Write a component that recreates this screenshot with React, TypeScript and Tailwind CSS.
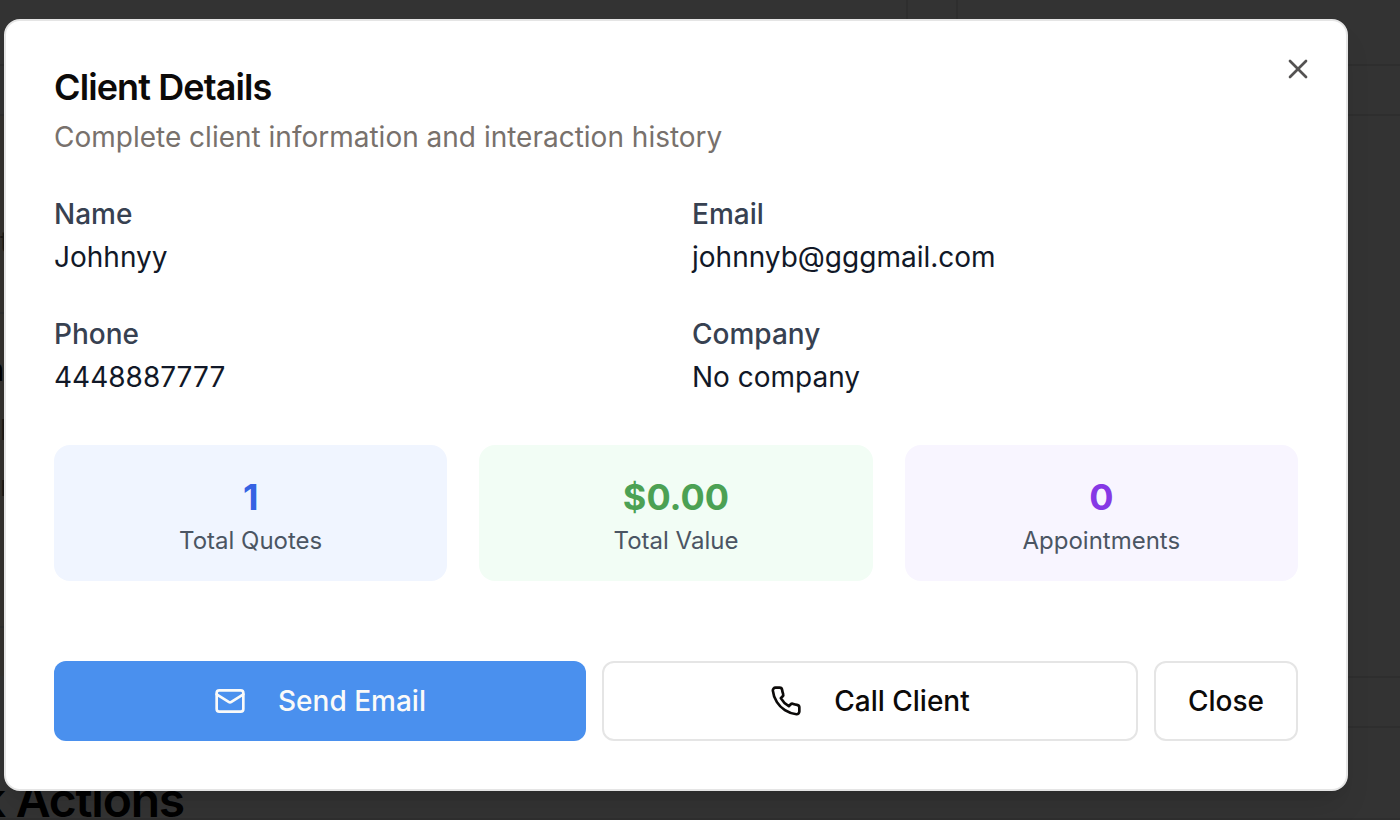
import type { ReactNode } from "react";
import { X } from "lucide-react";

const details = [
  { label: "Name", value: "Johhnyy" },
  { label: "Email", value: "johnnyb@gggmail.com" },
  { label: "Phone", value: "4448887777" },
  { label: "Company", value: "No company" },
];

const stats = [
  { value: "1", label: "Total Quotes", card: "bg-[#f0f5ff]", number: "text-[#3662e3]" },
  { value: "$0.00", label: "Total Value", card: "bg-[#f2fdf5]", number: "text-[#4ca154]" },
  { value: "0", label: "Appointments", card: "bg-[#f8f5ff]", number: "text-[#8638e5]" },
];

function Icon({ children }: { children: ReactNode }) {
  return (
    <svg
      viewBox="0 0 24 24"
      fill="none"
      stroke="currentColor"
      strokeWidth="2"
      strokeLinecap="round"
      strokeLinejoin="round"
      aria-hidden="true"
      className="size-8 shrink-0"
    >
      {children}
    </svg>
  );
}

function MailIcon() {
  return (
    <Icon>
      <rect width="20" height="16" x="2" y="4" rx="2" />
      <path d="m22 7-8.97 5.7a1.94 1.94 0 0 1-2.06 0L2 7" />
    </Icon>
  );
}

function PhoneIcon() {
  return (
    <Icon>
      <path d="M22 16.92v3a2 2 0 0 1-2.18 2 19.79 19.79 0 0 1-8.63-3.07 19.5 19.5 0 0 1-6-6 19.79 19.79 0 0 1-3.07-8.67A2 2 0 0 1 4.11 2h3a2 2 0 0 1 2 1.72 12.84 12.84 0 0 0 .7 2.81 2 2 0 0 1-.45 2.11L8.09 9.91a16 16 0 0 0 6 6l1.27-1.27a2 2 0 0 1 2.11-.45 12.84 12.84 0 0 0 2.81.7A2 2 0 0 1 22 16.92z" />
    </Icon>
  );
}

// The dimmed page that stays visible around the edges of the dialog.
function Backdrop() {
  return (
    <div aria-hidden="true" className="absolute inset-0 flex flex-col overflow-hidden bg-[#333333] text-black">
      <div className="flex h-16 shrink-0 justify-end">
        <div className="w-[52px] border-x-2 border-[#2e2e2e]" />
        <div className="w-[442px]" />
      </div>
      <div className="h-[52px] shrink-0 border-y-2 border-[#2e2e2e]" />
      <div className="flex h-[560px] shrink-0">
        <div className="flex w-10 flex-col bg-[#34322f] pt-[106px] text-[#191816]">
          <p>t</p>
          <hr className="mt-[50px] border-t-2 border-[#2e2e2e]" />
          <p className="mt-9 flex w-1 justify-end text-[32px] font-semibold text-black">n</p>
          <p className="mt-5">b</p>
          <p className="mt-4">m</p>
          <hr className="mt-[120px] border-t-2 border-[#2e2e2e]" />
        </div>
      </div>
      <div className="ml-10 h-[52px] shrink-0 border-y-2 border-[#2e2e2e]" />
      <div className="flex h-[92px] shrink-0 items-start border-b-2 border-[#2e2e2e] pt-11">
        <h2 className="flex w-[184px] justify-end text-5xl leading-[56px] font-semibold tracking-tight whitespace-nowrap">
          Quick Actions
        </h2>
      </div>
    </div>
  );
}

export default function App() {
  return (
    <main className="relative min-h-screen overflow-hidden pt-[19px] pr-[52px] pb-7 pl-1 font-['Inter',sans-serif] text-[28px] leading-10 text-[#0c0a09]">
      <Backdrop />
      <div
        role="dialog"
        aria-modal="true"
        aria-labelledby="dialog-title"
        aria-describedby="dialog-description"
        className="relative rounded-2xl border-2 border-[#e5e5e5] bg-white p-12 shadow-[0_20px_30px_-6px_rgb(0_0_0/0.1),0_8px_12px_-8px_rgb(0_0_0/0.1)]"
      >
        <header className="flex flex-col gap-3">
          <h2 id="dialog-title" className="text-4xl leading-9 font-semibold tracking-tight">
            Client Details
          </h2>
          <p id="dialog-description" className="text-[#78716c]">
            Complete client information and interaction history
          </p>
        </header>

        <dl className="mt-8 grid grid-cols-2 gap-8">
          {details.map((d) => (
            <div key={d.label}>
              <dt className="pt-[5px] pb-[3px] font-medium text-[#374151]">{d.label}</dt>
              <dd className="text-[#111827]">{d.value}</dd>
            </div>
          ))}
        </dl>

        <div className="mt-12 grid grid-cols-3 gap-8">
          {stats.map((s) => (
            <div key={s.label} className={`rounded-2xl p-6 text-center ${s.card}`}>
              <div className={`text-4xl leading-[56px] font-bold ${s.number}`}>{s.value}</div>
              <div className="text-2xl leading-8 text-[#4b5563]">{s.label}</div>
            </div>
          ))}
        </div>

        <div className="mt-20 flex gap-4 font-medium">
          <button type="button" className="flex h-20 flex-1 items-center justify-center gap-8 rounded-xl bg-[#4a90ee] px-8 text-[#fafaf9]">
            <MailIcon />
            Send Email
          </button>
          <button type="button" className="flex h-20 flex-1 items-center justify-center gap-8 rounded-xl border-2 border-[#e5e5e5] bg-white px-8">
            <PhoneIcon />
            Call Client
          </button>
          <button type="button" className="flex h-20 items-center justify-center rounded-xl border-2 border-[#e5e5e5] bg-white px-8">
            Close
          </button>
        </div>

        <button type="button" aria-label="Close dialog" className="absolute top-8 right-8 opacity-70">
          <X className="size-8" aria-hidden="true" />
        </button>
      </div>
    </main>
  );
}
